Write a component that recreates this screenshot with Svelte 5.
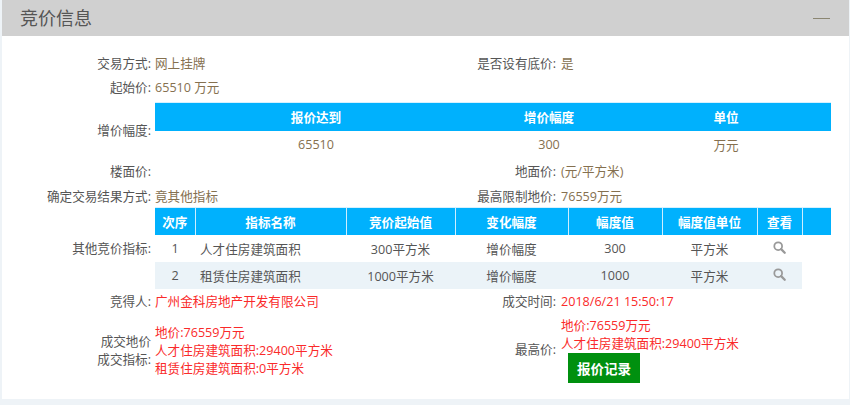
<script>
  const increments = [{ reach: '65510', step: '300', unit: '万元' }];
  const indicators = [
    { no: 1, name: '人才住房建筑面积', start: '300平方米', change: '增价幅度', value: '300', unit: '平方米' },
    { no: 2, name: '租赁住房建筑面积', start: '1000平方米', change: '增价幅度', value: '1000', unit: '平方米' }
  ];
</script>

<div class="page">
  <section class="card">
    <header class="head">
      <h2>竞价信息</h2>
      <span class="collapse"></span>
    </header>

    <div class="body">
      <div class="row">
        <span class="label">交易方式:</span><span class="value">网上挂牌</span>
        <span class="label">是否设有底价:</span><span class="value right">是</span>
      </div>
      <div class="row">
        <span class="label">起始价:</span><span class="value">65510 万元</span>
      </div>

      <div class="row tablerow first">
        <span class="label">增价幅度:</span>
        <table class="data plain">
          <colgroup><col class="a1" /><col class="a2" /><col class="a3" /></colgroup>
          <thead><tr><th>报价达到</th><th>增价幅度</th><th>单位</th></tr></thead>
          <tbody>
            {#each increments as r}
              <tr><td>{r.reach}</td><td>{r.step}</td><td>{r.unit}</td></tr>
            {/each}
          </tbody>
        </table>
      </div>

      <div class="row after">
        <span class="label">楼面价:</span><span class="value"></span>
        <span class="label">地面价:</span><span class="value right">(元/平方米)</span>
      </div>
      <div class="row result">
        <span class="label">确定交易结果方式:</span><span class="value">竟其他指标</span>
        <span class="label">最高限制地价:</span><span class="value right">76559万元</span>
      </div>

      <div class="row tablerow">
        <span class="label">其他竞价指标:</span>
        <table class="data striped">
          <colgroup>
            <col class="b1" /><col class="b2" /><col class="b3" /><col class="b4" />
            <col class="b5" /><col class="b6" /><col class="b7" /><col class="b8" />
          </colgroup>
          <thead>
            <tr>
              <th>次序</th><th>指标名称</th><th>竞价起始值</th><th>变化幅度</th>
              <th>幅度值</th><th>幅度值单位</th><th>查看</th><th></th>
            </tr>
          </thead>
          <tbody>
            {#each indicators as r}
              <tr>
                <td>{r.no}</td>
                <td class="name">{r.name}</td>
                <td>{r.start}</td>
                <td>{r.change}</td>
                <td>{r.value}</td>
                <td>{r.unit}</td>
                <td>
                  <svg class="search" viewBox="0 0 14 14" width="13" height="13" aria-label="查看">
                    <circle cx="5.6" cy="5.6" r="4.2" fill="none" stroke="currentColor" stroke-width="1.9" />
                    <path d="M8.8 8.8 L12.6 12.6" fill="none" stroke="currentColor" stroke-width="2.5" stroke-linecap="round" />
                  </svg>
                </td>
              </tr>
            {/each}
          </tbody>
        </table>
      </div>

      <div class="row winner">
        <span class="label">竞得人:</span><span class="value red">广州金科房地产开发有限公司</span>
        <span class="label">成交时间:</span><span class="value red right">2018/6/21 15:50:17</span>
      </div>

      <div class="row final">
        <span class="label nudge">成交地价<br />成交指标:</span>
        <div class="value red lines nudge">
          <div>地价:76559万元</div>
          <div>人才住房建筑面积:29400平方米</div>
          <div>租赁住房建筑面积:0平方米</div>
        </div>
        <span class="label">最高价:</span>
        <div class="value red lines right">
          <div>地价:76559万元</div>
          <div>人才住房建筑面积:29400平方米</div>
          <button type="button" class="records">报价记录</button>
        </div>
      </div>
    </div>
  </section>
</div>

<style>
  :global(body) {
    margin: 0;
    background: #eef3f7;
  }
  .page {
    width: 850px;
    height: 405px;
    padding: 0 1px 6px 2px;
    box-sizing: border-box;
    font-family: "Open Sans", "Noto Sans CJK SC", sans-serif;
    font-size: 12.6px;
    color: #555;
    overflow: hidden;
  }
  .card {
    background: #fff;
    height: 399px;
  }
  .head {
    height: 36px;
    background: #d0d0d0;
    display: flex;
    align-items: center;
    justify-content: space-between;
    padding: 0 19px 0 18px;
  }
  h2 {
    margin: 0;
    font-size: 18px;
    font-weight: 400;
    line-height: 36px;
    color: #555;
  }
  .collapse {
    width: 17px;
    height: 1px;
    background: #8b8672;
  }
  .body {
    padding: 16px 18px 0 0;
  }
  .row {
    display: grid;
    grid-template-columns: 149px 318px 79px 1fr;
    column-gap: 4px;
    align-items: center;
    height: 24px;
    line-height: 24px;
  }
  .label {
    text-align: right;
    white-space: nowrap;
  }
  .value {
    color: #85704f;
    white-space: nowrap;
  }
  .right {
    padding-left: 1px;
  }
  .value.red {
    color: #fa2a2a;
  }
  .nudge {
    padding-top: 2px;
  }
  .tablerow {
    height: auto;
    line-height: normal;
  }
  .tablerow table {
    grid-column: 2 / 5;
  }
  .first {
    margin-top: 2px;
  }
  .after {
    margin-top: 2px;
  }
  .result {
    margin-top: 1px;
    height: 22px;
  }
  .winner {
    margin-top: 1px;
  }
  .final {
    margin-top: 3px;
    height: 66px;
  }
  .final .label {
    line-height: 18px;
  }
  .value.lines {
    line-height: 18px;
  }
  .data {
    table-layout: fixed;
    width: 676px;
    border-collapse: collapse;
    text-align: center;
  }
  .data th {
    height: 28px;
    padding: 0;
    background: #00b1fd;
    color: #fff;
    font-weight: 700;
    font-size: 12.6px;
    border-top: 1px solid #d5f1ff;
    box-sizing: border-box;
  }
  .data td {
    height: 27px;
    padding: 0;
    box-sizing: border-box;
  }
  .plain td {
    color: #85704f;
  }
  .striped th + th {
    border-left: 1px solid #cdeeff;
  }
  .striped tbody tr:nth-child(even) td {
    background: #ebf3f8;
  }
  .striped td.name {
    text-align: left;
    padding-left: 5px;
  }
  .a1 { width: 322px; }
  .a2 { width: 144px; }
  .a3 { width: 210px; }
  .b1 { width: 40px; }
  .b2 { width: 151px; }
  .b3 { width: 109px; }
  .b4 { width: 113px; }
  .b5 { width: 94px; }
  .b6 { width: 95px; }
  .b7 { width: 45px; }
  .b8 { width: 29px; }
  .search {
    color: #999;
    display: block;
    margin: -3px auto 0;
  }
  .records {
    display: block;
    width: 72px;
    height: 30px;
    margin: 0 0 0 7px;
    padding: 0;
    border: 0;
    background: #00900f;
    color: #fff;
    font: 700 13.5px "Noto Sans CJK SC", sans-serif;
  }
</style>
